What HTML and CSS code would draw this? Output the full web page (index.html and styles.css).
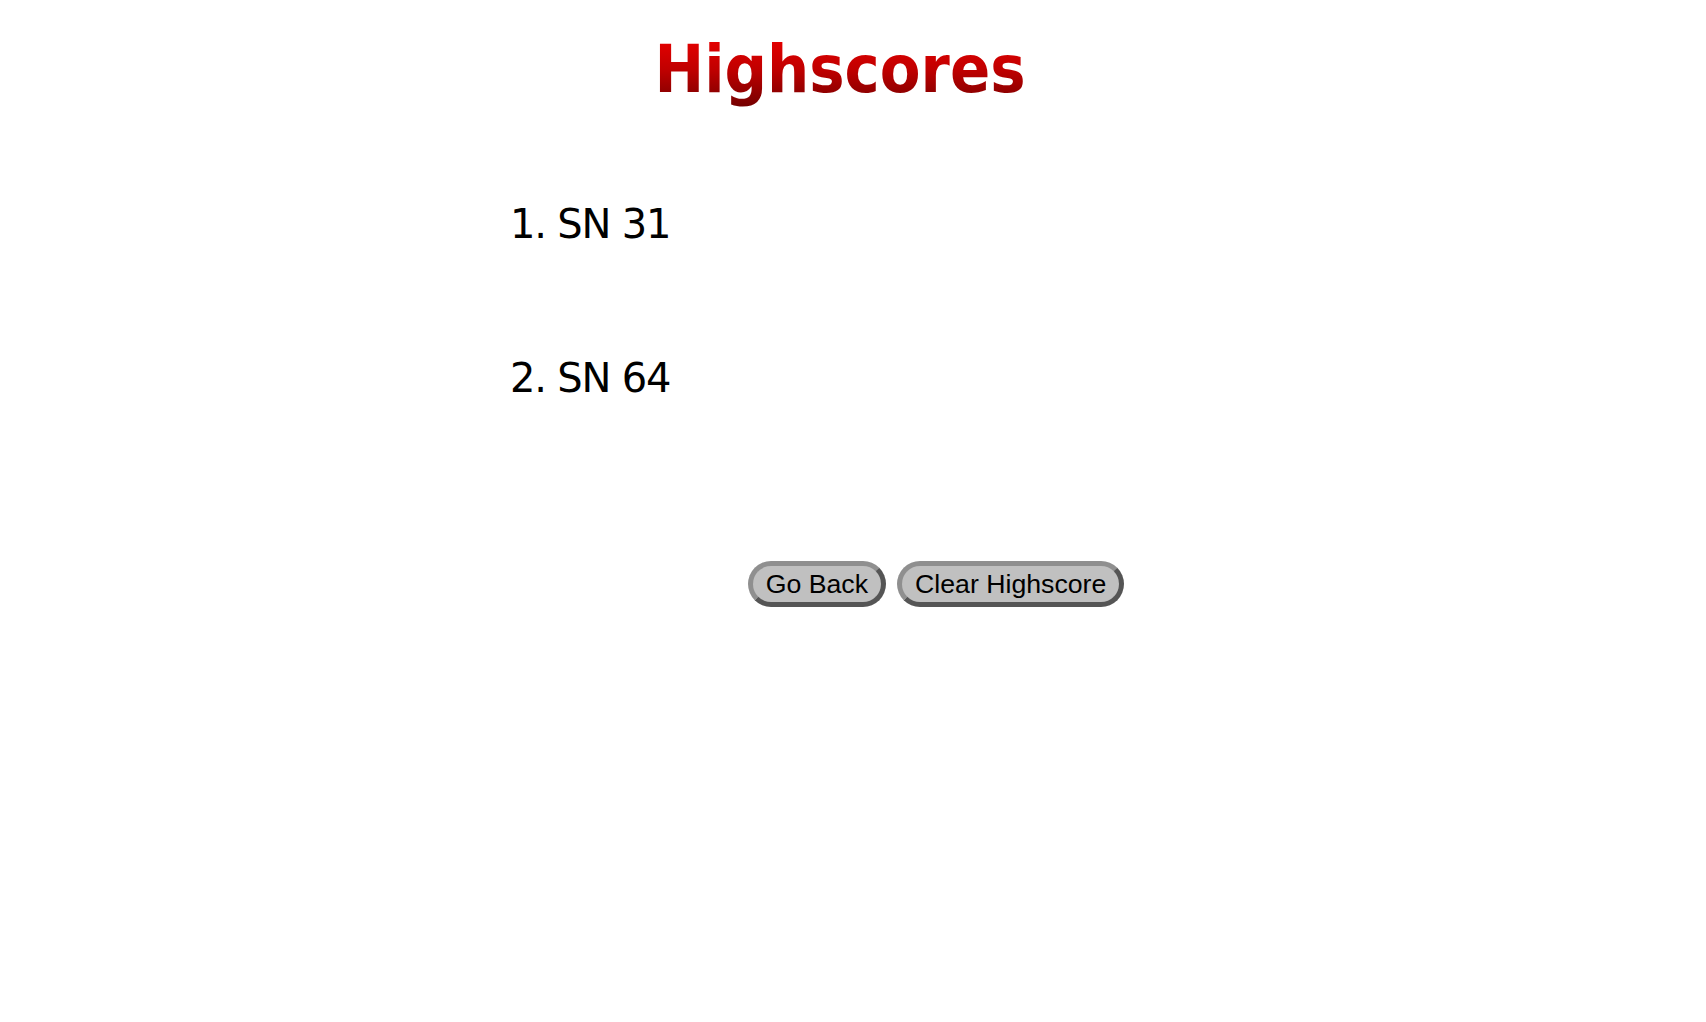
FILE: index.html
```html
<!DOCTYPE html>
<html>
<head>
<meta charset="utf-8">
<title>Highscores</title>
<link rel="stylesheet" href="styles.css">
</head>
<body>
<header class="head">
  <h1 class="title">Highscores</h1>
</header>
<main class="board">
  <ol class="scores">
    <li class="score">SN 31</li>
    <li class="score">SN 64</li>
  </ol>
  <div class="actions">
    <button class="btn">Go Back</button>
    <button class="btn">Clear Highscore</button>
  </div>
</main>
</body>
</html>
```
FILE: styles.css
```css
html, body {
  margin: 0;
  padding: 0;
  background: #ffffff;
}
body {
  font-family: "DejaVu Sans", "Liberation Sans", sans-serif;
}
.head {
  display: flex;
  justify-content: center;
  padding-top: 30px;
  padding-right: 26px;
}
.title {
  margin: 0;
  font-family: "DejaVu Sans Condensed", "DejaVu Sans", sans-serif;
  font-size: 66px;
  line-height: 1.2;
  font-weight: bold;
  background: linear-gradient(to bottom, #f00000 0%, #c00000 50%, #700000 100%);
  -webkit-background-clip: text;
  background-clip: text;
  color: transparent;
}
.board {
  margin-left: 510px;
  width: 852px;
}
.scores {
  margin: 0;
  padding: 0;
  list-style: decimal inside;
  padding-top: 91px;
}
.score {
  font-size: 40px;
  line-height: 48px;
  height: 154px;
  letter-spacing: -1.2px;
  color: #000;
}
.actions {
  display: flex;
  justify-content: center;
  gap: 11px;
  padding-top: 53px;
}
.btn {
  font-family: "Liberation Sans", Arial, sans-serif;
  font-size: 26.7px;
  color: #000;
  background: #c0c0c0;
  border-width: 5px;
  border-style: solid;
  border-color: #8f8f8f #555555 #555555 #8f8f8f;
  border-radius: 24px;
  padding: 3px 13px;
  height: 46px;
}
```
